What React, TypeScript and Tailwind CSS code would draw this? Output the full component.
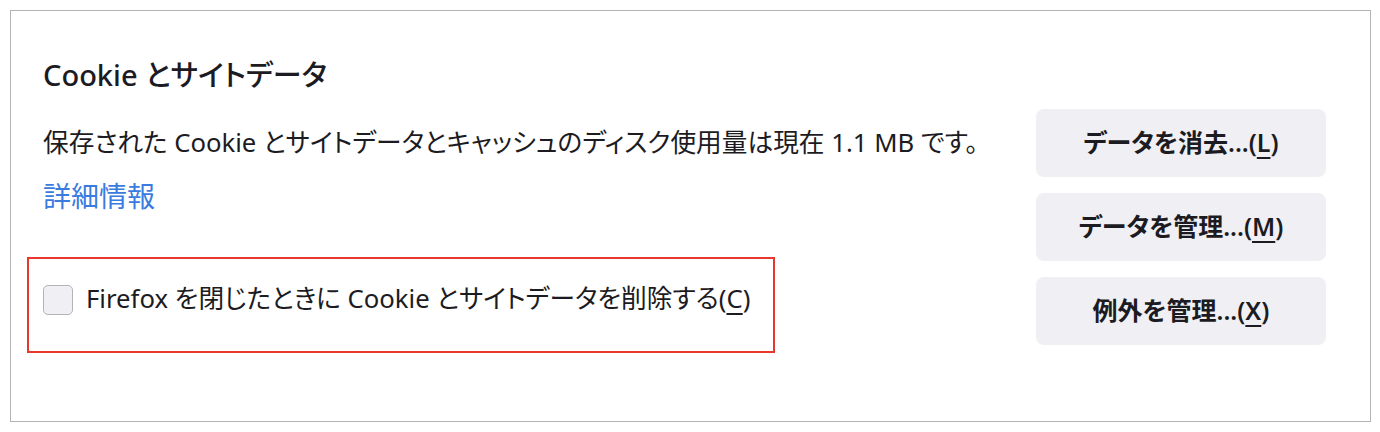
import React from "react";

const font = "[font-family:'Noto_Sans','Noto_Sans_CJK_JP',sans-serif] [font-feature-settings:'palt']";

function Btn({ label, k }: { label: string; k: string }) {
  return (
    <div className="h-[68px] w-[290px] rounded-[8px] bg-[#f0f0f4] flex items-center justify-center text-[25px] font-semibold text-[#1c1b22]">
      <span>
        {label}...(<span className="underline underline-offset-[5px] decoration-[2px]">{k}</span>)
      </span>
    </div>
  );
}

export default function App() {
  return (
    <div className={`w-[1380px] h-[432px] bg-white pt-[10px] pl-[10px] ${font}`}>
      <div className="w-[1361px] h-[412px] border border-[#b4b4b4] pl-[32px] pr-[44px] pt-[44px] text-[#1c1b22]">
        <h2 className="text-[29px] font-medium leading-[40px]">Cookie とサイトデータ</h2>
        <div className="mt-[14px] flex">
          <div className="flex-1">
            <div className="h-[68px] flex items-center text-[25.7px]">
              保存された Cookie とサイトデータとキャッシュのディスク使用量は現在 1.1 MB です。
            </div>
            <div className="mt-[1px] leading-[36px] text-[28px] text-[#3a7be0]">詳細情報</div>
            <div className="mt-[43px] -ml-[16px] w-[748px] h-[96px] border-2 border-[#e8372c] pl-[14px] pt-[25px]">
              <div className="flex items-center h-[31px]">
                <div className="w-[30px] h-[30px] rounded-[5px] border border-[#b3b3ba] bg-[#f0f0f4]" />
                <span className="ml-[13px] text-[25.7px]">
                  Firefox を閉じたときに Cookie とサイトデータを削除する(<span className="underline underline-offset-[5px] decoration-[2px]">C</span>)
                </span>
              </div>
            </div>
          </div>
          <div className="flex flex-col gap-[16px]">
            <Btn label="データを消去" k="L" />
            <Btn label="データを管理" k="M" />
            <Btn label="例外を管理" k="X" />
          </div>
        </div>
      </div>
    </div>
  );
}
